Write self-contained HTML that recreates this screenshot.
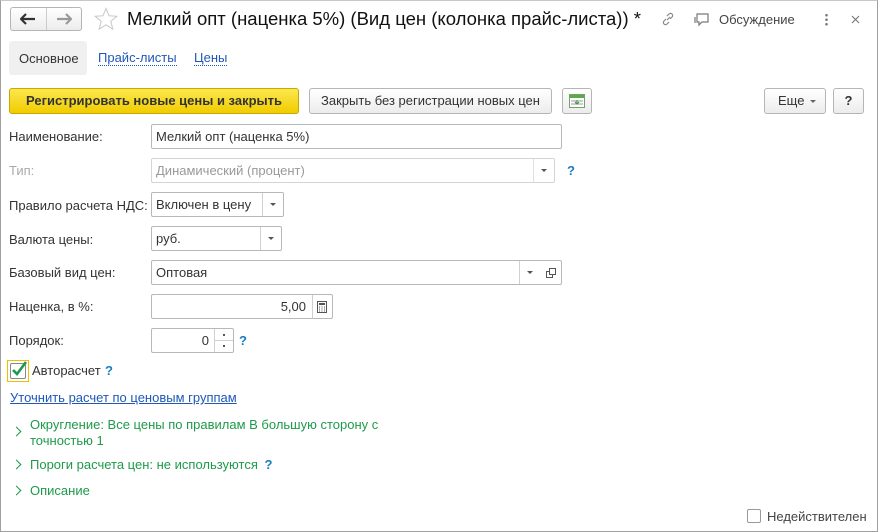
<!DOCTYPE html>
<html><head><meta charset="utf-8"><style>
*{box-sizing:border-box;margin:0;padding:0}
body{width:878px;height:532px;background:#fff;font-family:"Liberation Sans",Arial,sans-serif;font-size:13px;color:#333;position:relative;overflow:hidden}
.frame{position:absolute;left:0;top:0;width:878px;height:532px;border:1px solid #a0a0a0;border-top-color:#c8c8c8}
.a{position:absolute;white-space:nowrap}
.btn{position:absolute;border:1px solid #b5b5b5;border-radius:3px;background:linear-gradient(#fff,#ececec);text-align:center;line-height:23px;color:#333}
.fld{position:absolute;border:1px solid #b8b8b8;border-radius:2px;background:#fff;height:25px;line-height:23px;padding-left:4px;color:#333}
.dd{position:absolute;top:0;bottom:0;border-left:1px solid #d0d0d0;width:21px}
.dd:after{content:"";position:absolute;left:7px;top:10px;border-left:3px solid transparent;border-right:3px solid transparent;border-top:3px solid #555}
.q{position:absolute;color:#1a7dc4;font-weight:bold;font-size:13px}
.lbl{position:absolute;left:9px;color:#333}
.grn{position:absolute;color:#1d9a4a;font-size:13px}
.chev{position:absolute;left:13px;width:7px;height:7px;border-right:1.5px solid #1d9a4a;border-top:1.5px solid #1d9a4a;transform:rotate(45deg)}
</style></head><body>
<div class="frame"></div>
<!-- nav -->
<div class="btn" style="left:10px;top:7px;width:72px;height:24px"></div>
<div class="a" style="left:46px;top:8px;width:1px;height:22px;background:#ccc"></div>
<svg class="a" style="left:20px;top:13px" width="16" height="12"><path d="M1 6h14M6 1L1 6l5 5" stroke="#333" stroke-width="2.2" fill="none"/></svg>
<svg class="a" style="left:56px;top:13px" width="16" height="12"><path d="M15 6H1M10 1l5 5-5 5" stroke="#999" stroke-width="2.2" fill="none"/></svg>
<svg class="a" style="left:94px;top:7px" width="24" height="24" viewBox="0 0 24 24"><path d="M12 1.5l3 7.3 7.8.5-6 5 2 7.7L12 17.8 5.2 22l2-7.7-6-5 7.8-.5z" fill="none" stroke="#c8c8c8" stroke-width="1"/></svg>
<div class="a" style="left:127px;top:8px;font-size:18.5px;color:#111">Мелкий опт (наценка 5%) (Вид цен (колонка прайс-листа)) *</div>
<svg class="a" style="left:660px;top:11px" width="16" height="16" viewBox="0 0 16 16" fill="none" stroke="#888" stroke-width="1.2"><path d="M7 9l3-3M6 8l-2 2a2 2 0 0 0 3 3l2-2M10 8l2-2a2 2 0 0 0-3-3L7 5"/></svg>
<svg class="a" style="left:693px;top:11px" width="18" height="16" viewBox="0 0 18 16" fill="none" stroke="#777" stroke-width="1.2"><path d="M4 3h11v8H9l-3 3v-3H4z"/><path d="M2 6v6"/></svg>
<div class="a" style="left:719px;top:12px;color:#444">Обсуждение</div>
<div class="a" style="left:825px;top:13px;width:3px;height:13px;background:radial-gradient(circle,#777 1.2px,transparent 1.4px) 0 0/3px 4.5px"></div>
<svg class="a" style="left:851px;top:15px" width="9" height="9"><path d="M1 1l7 7M8 1L1 8" stroke="#777" stroke-width="1.1"/></svg>
<!-- tabs -->
<div class="a" style="left:9px;top:41px;width:78px;height:34px;background:#f0f0f0;border-radius:3px"></div>
<div class="a" style="left:19px;top:51px;color:#333">Основное</div>
<div class="a" style="left:98px;top:51px;color:#1f58b8;border-bottom:1px dotted #1f58b8;line-height:14px">Прайс-листы</div>
<div class="a" style="left:194px;top:51px;color:#1f58b8;border-bottom:1px dotted #1f58b8;line-height:14px">Цены</div>
<!-- buttons -->
<div class="btn" style="left:9px;top:88px;width:290px;height:26px;background:linear-gradient(#fbe84e,#f2cc00);border-color:#c9a800;font-weight:bold;color:#333">Регистрировать новые цены и закрыть</div>
<div class="btn" style="left:309px;top:88px;width:243px;height:26px">Закрыть без регистрации новых цен</div>
<div class="btn" style="left:562px;top:88px;width:30px;height:26px"></div>
<svg class="a" style="left:569px;top:94px" width="16" height="14"><rect x="0.5" y="0.5" width="15" height="13" fill="#fff" stroke="#7aa06a"/><rect x="1" y="1" width="14" height="3" fill="#5aaa4a"/><path d="M2 7h12M2 10h12" stroke="#999"/><path d="M8 6v4M6 8l2 2 2-2" stroke="#3a9a3a" fill="none"/></svg>
<div class="btn" style="left:764px;top:88px;width:62px;height:26px;text-align:left;padding-left:13px">Еще</div>
<div class="a" style="left:810px;top:100px;border-left:3px solid transparent;border-right:3px solid transparent;border-top:3px solid #666"></div>
<div class="btn" style="left:833px;top:88px;width:31px;height:26px;font-weight:bold">?</div>
<!-- fields -->
<div class="lbl" style="top:129px">Наименование:</div>
<div class="fld" style="left:151px;top:124px;width:411px">Мелкий опт (наценка 5%)</div>
<div class="lbl" style="top:163px;color:#aaa">Тип:</div>
<div class="fld" style="left:151px;top:158px;width:404px;color:#999;border-color:#d4d4d4">Динамический (процент)<div class="dd" style="right:0;border-color:#e0e0e0"></div></div>
<div class="q" style="left:567px;top:163px">?</div>
<div class="lbl" style="top:198px">Правило расчета НДС:</div>
<div class="fld" style="left:151px;top:192px;width:133px">Включен в цену<div class="dd" style="right:0"></div></div>
<div class="lbl" style="top:232px">Валюта цены:</div>
<div class="fld" style="left:151px;top:226px;width:131px">руб.<div class="dd" style="right:0"></div></div>
<div class="lbl" style="top:265px">Базовый вид цен:</div>
<div class="fld" style="left:151px;top:260px;width:411px">Оптовая<div class="dd" style="right:21px"></div><svg class="a" style="right:5px;top:7px" width="10" height="10"><rect x="3.5" y="0.5" width="6" height="6" fill="none" stroke="#555"/><path d="M3.5 3.5h-3v6h6v-3" fill="none" stroke="#555"/></svg></div>
<div class="lbl" style="top:299px">Наценка, в %:</div>
<div class="fld" style="left:151px;top:294px;width:182px;padding-right:26px;text-align:right">5,00<div class="a" style="right:0;top:0;bottom:0;width:20px;border-left:1px solid #d0d0d0"></div><svg class="a" style="right:5px;top:6px" width="10" height="12"><rect x="0.5" y="0.5" width="9" height="11" fill="none" stroke="#555"/><rect x="2" y="2" width="6" height="2" fill="#555"/><path d="M2 6h1M4.5 6h1M7 6h1M2 8h1M4.5 8h1M7 8h1M2 10h1M4.5 10h1M7 10h1" stroke="#555"/></svg></div>
<div class="lbl" style="top:333px">Порядок:</div>
<div class="fld" style="left:151px;top:328px;width:83px;padding-right:24px;text-align:right">0<div class="a" style="right:0;top:0;bottom:0;width:19px;border-left:1px solid #d0d0d0"></div><div class="a" style="right:0;top:11px;width:19px;height:1px;background:#d0d0d0"></div><div class="a" style="right:8px;top:5px;width:2px;height:2px;background:#555"></div><div class="a" style="right:8px;top:16px;width:2px;height:2px;background:#555"></div></div>
<div class="q" style="left:239px;top:333px">?</div>
<!-- checkbox -->
<div class="a" style="left:7px;top:360px;width:22px;height:22px;border:1px solid #f0c000"></div>
<div class="a" style="left:10px;top:363px;width:16px;height:16px;border:1px solid #888;border-radius:2px;background:#fff"></div>
<svg class="a" style="left:10px;top:360px" width="18" height="18"><path d="M3 10l4 4 9-12" stroke="#1d9a4a" stroke-width="2.6" fill="none"/></svg>
<div class="a" style="left:32px;top:363px">Авторасчет</div>
<div class="q" style="left:105px;top:363px">?</div>
<div class="a" style="left:10px;top:390px;color:#1f58b8;text-decoration:underline">Уточнить расчет по ценовым группам</div>
<div class="chev" style="top:428px"></div>
<div class="grn" style="left:30px;top:417px;line-height:16px">Округление: Все цены по правилам В большую сторону с<br>точностью 1</div>
<div class="chev" style="top:461px"></div>
<div class="grn" style="left:30px;top:457px">Пороги расчета цен: не используются <span style="color:#1a7dc4;font-weight:bold;margin-left:3px">?</span></div>
<div class="chev" style="top:487px"></div>
<div class="grn" style="left:30px;top:483px">Описание</div>
<div class="a" style="left:747px;top:509px;width:14px;height:14px;border:1px solid #999;border-radius:2px"></div>
<div class="a" style="left:767px;top:509px;color:#444">Недействителен</div>
</body></html>
